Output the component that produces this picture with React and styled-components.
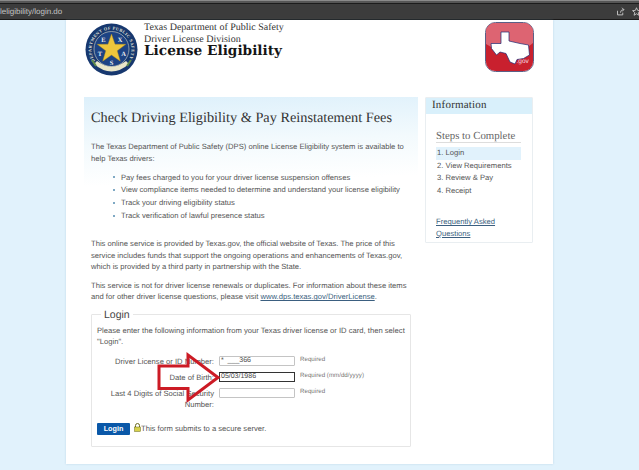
import React from 'react';
import styled, { createGlobalStyle } from 'styled-components';

const GlobalStyle = createGlobalStyle`
  html, body {
    margin: 0;
    padding: 0;
    height: 470px;
    overflow: hidden;
    background: #e1f2fc;
    font-family: "Liberation Sans", Arial, sans-serif;
    text-rendering: geometricPrecision;
  }
`;

const serif = '"Liberation Serif", "Times New Roman", serif';

const Page = styled.div`
  position: relative;
  width: 639px;
  height: 470px;
  overflow: hidden;
`;

// browser chrome strip on top of the shot
const TabStrip = styled.div`
  height: 4px;
  background: linear-gradient(#8a8a8a 0 1px, #565656 1px 3px, #1c1c1c 3px);
`;

const AddressBar = styled.div`
  height: 15px;
  background: #3c3c3c;
  border-bottom: 1px solid #1a1a1a;
  display: flex;
  align-items: center;
  justify-content: space-between;
  color: #c4c4c4;
  font-size: 8px;
`;

const BarIcons = styled.div`
  display: flex;
  gap: 7px;
  align-items: center;
  color: #c9c9c9;
  margin-right: -2px;
`;

const Sheet = styled.main`
  margin-left: 66px;
  width: 469px;
  height: 444px;
  padding: 0 0 0 18px;
  background: #fff;
  box-shadow: 0 0 2px rgba(120, 160, 190, 0.35);
`;

const Header = styled.header`
  display: flex;
  align-items: flex-start;
  height: 77px;
  padding-top: 2px;
  box-sizing: border-box;
`;

const Seal = styled.svg`
  width: 53px;
  height: 53px;
  margin: 1px 6px 0 1px;
  flex: none;
`;

const TitleBlock = styled.div`
  font-family: ${serif};
  color: #333;
  flex: 1;
`;

const Agency = styled.div`
  font-size: 10px;
  line-height: 12px;
`;

const AppTitle = styled.h1`
  margin: -2px 0 0;
  font-family: "DejaVu Serif", ${serif};
  font-size: 13.7px;
  line-height: 15px;
  font-weight: 700;
  color: #151515;
`;

const GovLogo = styled.svg`
  width: 49px;
  height: 50px;
  margin-right: 19px;
  flex: none;
`;

const Columns = styled.div`
  display: flex;
  align-items: flex-start;
  gap: 7px;
`;

const Content = styled.section`
  width: 320px;
  padding: 0 7px;
  background: linear-gradient(178deg, #ddf0fb 0, #f3fafd 50px, #fff 90px);
  height: 350px;
  flex: none;
  color: #555;
  font-size: 7.65px;
  line-height: 11.5px;
`;

const Heading = styled.h2`
  margin: 0;
  padding-top: 11px;
  height: 30px;
  font-family: ${serif};
  font-size: 14.3px;
  line-height: 20px;
  font-weight: 400;
  color: #333;
`;

const Para = styled.p`
  margin: ${(p) => p.$top || 0}px 0 0;
`;

const Bullets = styled.ul`
  list-style: none;
  margin: 7px 0 0;
  padding: 0 0 0 22px;
`;

const Bullet = styled.li`
  display: flex;
  align-items: center;
  height: 12.8px;
  gap: 6px;
  &::before {
    content: '';
    width: 2px;
    height: 2px;
    background: #7fa9c4;
  }
`;

const TextLink = styled.a`
  color: #3b5f80;
  text-decoration: underline;
`;

const LoginBox = styled.fieldset`
  margin: 6px 0 0;
  padding: 4px 5px 0;
  width: 320px;
  height: 138px;
  box-sizing: border-box;
  border: 1px solid #e6e6e6;
  border-radius: 1px;
`;

const Legend = styled.legend`
  margin-left: 4px;
  padding: 0 3px;
  font-size: 10.5px;
  line-height: 12px;
  color: #444;
`;

const FormRows = styled.div`
  display: flex;
  flex-direction: column;
  gap: 4.5px;
  margin-top: 8px;
`;

const FormRow = styled.div`
  display: grid;
  grid-template-columns: 116px 77px auto;
  column-gap: 5px;
  align-items: start;
`;

const Label = styled.label`
  text-align: right;
  line-height: 11.5px;
  margin-right: -1px;
`;

const Field = styled.div`
  box-sizing: border-box;
  height: 10px;
  margin-left: 1px;
  padding-left: 1px;
  border: 1px solid ${(p) => (p.$focus ? '#333' : '#c4c4c4')};
  border-radius: ${(p) => (p.$focus ? 0 : 1)}px;
  background: #fff;
  font-size: 7px;
  line-height: 8px;
  color: #444;
`;

const Hint = styled.span`
  font-size: 6.2px;
  line-height: 8px;
  color: #777;
`;

const Submit = styled.div`
  display: flex;
  align-items: center;
  margin-top: 12px;
`;

const LoginButton = styled.button`
  width: 33px;
  height: 12px;
  padding: 0;
  border: 0;
  border-radius: 1px;
  background: #0a58a8;
  color: #fff;
  font-family: inherit;
  font-size: 7.2px;
  font-weight: 700;
  line-height: 12px;
  margin-right: 4px;
`;

const Lock = styled.svg`
  width: 7px;
  height: 9px;
  flex: none;
  margin-top: -2px;
`;

const Sidebar = styled.aside`
  width: 108px;
  height: 146px;
  box-sizing: border-box;
  flex: none;
  background: #fff;
  border: 1px solid #e9eef1;
  border-radius: 1px;
  color: #555;
  font-size: 7.65px;
`;

const SideTitle = styled.div`
  height: 16px;
  padding-left: 6px;
  background: #d9f0fb;
  font-family: ${serif};
  font-size: 11px;
  line-height: 15px;
  color: #333;
  letter-spacing: 0.2px;
`;

const SideBody = styled.div`
  padding: 16px 11px 0 10px;
`;

const StepsTitle = styled.div`
  height: 12px;
  border-bottom: 1px solid #ddd;
  font-family: ${serif};
  font-size: 10.8px;
  line-height: 12px;
  color: #666;
  margin-bottom: 4px;
`;

const Step = styled.div`
  height: 12.6px;
  line-height: 12.6px;
  padding-left: 1px;
  background: ${(p) => (p.$active ? '#e1f2fc' : 'transparent')};
`;

const FaqLink = styled(TextLink)`
  display: block;
  margin-top: 19px;
  line-height: 11.5px;
`;

const Arrow = styled.svg`
  position: absolute;
  left: 150px;
  top: 345px;
  width: 80px;
  height: 65px;
  pointer-events: none;
`;

const steps = ['1. Login', '2. View Requirements', '3. Review & Pay', '4. Receipt'];

const bullets = [
  'Pay fees charged to you for your driver license suspension offenses',
  'View compliance items needed to determine and understand your license eligibility',
  'Track your driving eligibility status',
  'Track verification of lawful presence status',
];

const starPoints = Array.from({ length: 10 }, (_, i) => {
  const r = i % 2 === 0 ? 15 : 6;
  const a = (Math.PI / 5) * i - Math.PI / 2;
  return `${(26.5 + r * Math.cos(a)).toFixed(2)},${(26 + r * Math.sin(a)).toFixed(2)}`;
}).join(' ');

const SealIcon = () => (
  <Seal viewBox="0 0 53 53">
    <defs>
      <path id="sealArc" d="M10.1 38 A20 20 0 1 1 42.9 38" />
    </defs>
    <circle cx="26.5" cy="26.5" r="26" fill="#17386f" />
    <circle cx="26.5" cy="26" r="17.5" fill="#1d4384" stroke="#d8d8c8" strokeWidth="0.6" />
    <text fontFamily="Liberation Serif, serif" fontSize="4.3" fontWeight="700" fill="#e6e6dc">
      <textPath href="#sealArc" textLength="84" lengthAdjust="spacing">DEPARTMENT OF PUBLIC SAFETY</textPath>
    </text>
    <path d="M9 41 Q26.5 56 44 41 L41 38 Q26.5 49 12 38 Z" fill="#e9e6c9" />
    <path d="M7 37 l4 6 M46 37 l-4 6" stroke="#5f8a4a" strokeWidth="2" />
    <polygon points={starPoints} fill="#eec63c" stroke="#b08c1c" strokeWidth="0.4" />
    <g fontFamily="Liberation Serif, serif" fontSize="6.5" fontWeight="700" fill="#f2f2f2" textAnchor="middle">
      <text x="18.5" y="19">E</text>
      <text x="35" y="19">X</text>
      <text x="15" y="33">T</text>
      <text x="38.5" y="33">A</text>
      <text x="26.5" y="42">S</text>
    </g>
  </Seal>
);

const TexasGovIcon = () => (
  <GovLogo viewBox="0 0 49 50">
    <defs>
      <clipPath id="logoClip">
        <rect x="1" y="1" width="47" height="48" rx="9" />
      </clipPath>
    </defs>
    <rect x="0.5" y="0.5" width="48" height="49" rx="10" fill="#fff" stroke="#5b5f86" />
    <g clipPath="url(#logoClip)">
      <rect x="1" y="1" width="47" height="48" fill="#c9202e" />
      <path d="M1 1 H48 V21 Q36 32 22 30 Q10 28 1 22 Z" fill="#dd6472" />
    </g>
    <path
      d="M16 10 L24 10 L24 19 L35 21.5 L43.5 23 L44.5 33 L38.5 36.5 L32 37.5 L30 42 L25 40 L21 31.5 L15 30 L11.5 33 L6.5 26.5 L6 21.5 L16 21.5 Z"
      fill="#fff"
      stroke="#1d2a74"
      strokeWidth="0.7"
      strokeLinejoin="round"
    />
    <text x="31.5" y="41" fontFamily="Liberation Sans, sans-serif" fontSize="6.5" fill="#f6dfe1">.gov</text>
  </GovLogo>
);

const App = () => (
  <Page>
    <GlobalStyle />
    <TabStrip />
    <AddressBar>
      <span>leligibility/login.do</span>
      <BarIcons>
        <svg width="9" height="9" viewBox="0 0 24 24" fill="none" stroke="currentColor" strokeWidth="2.4">
          <path d="M4 10v11h14v-6M12 15c0-5 3-8 9-8M16 2l5 5-5 5" />
        </svg>
        <svg width="9" height="9" viewBox="0 0 24 24" fill="none" stroke="currentColor" strokeWidth="2.4">
          <path d="M12 2l3 7 7.5.7-5.7 5 1.7 7.3L12 18l-6.5 4 1.7-7.3-5.7-5L9 9z" />
        </svg>
      </BarIcons>
    </AddressBar>
    <Sheet>
      <Header>
        <SealIcon />
        <TitleBlock>
          <Agency>Texas Department of Public Safety</Agency>
          <Agency>Driver License Division</Agency>
          <AppTitle>License Eligibility</AppTitle>
        </TitleBlock>
        <TexasGovIcon />
      </Header>
      <Columns>
        <Content>
          <Heading>Check Driving Eligibility &amp; Pay Reinstatement Fees</Heading>
          <Para $top={3}>
            The Texas Department of Public Safety (DPS) online License Eligibility system is available to help Texas drivers:
          </Para>
          <Bullets>
            {bullets.map((b) => (
              <Bullet key={b}>{b}</Bullet>
            ))}
          </Bullets>
          <Para $top={16}>
            This online service is provided by Texas.gov, the official website of Texas. The price of this service includes funds that support the ongoing operations and enhancements of Texas.gov, which is provided by a third party in partnership with the State.
          </Para>
          <Para $top={7}>
            This service is not for driver license renewals or duplicates. For information about these items and for other driver license questions, please visit <TextLink>www.dps.texas.gov/DriverLicense</TextLink>.
          </Para>
          <LoginBox>
            <Legend>Login</Legend>
            <div>
              Please enter the following information from your Texas driver license or ID card, then select "Login".
            </div>
            <FormRows>
              <FormRow>
                <Label>Driver License or ID Number:</Label>
                <Field>*&nbsp; ___366</Field>
                <Hint>Required</Hint>
              </FormRow>
              <FormRow>
                <Label>Date of Birth:</Label>
                <Field $focus>05/03/1986</Field>
                <Hint>Required (mm/dd/yyyy)</Hint>
              </FormRow>
              <FormRow>
                <Label>Last 4 Digits of Social Security Number:</Label>
                <Field />
                <Hint>Required</Hint>
              </FormRow>
            </FormRows>
            <Submit>
              <LoginButton type="button">Login</LoginButton>
              <Lock viewBox="0 0 7 9">
                <path d="M1.5 4V2.5a2 2 0 0 1 4 0V4" fill="none" stroke="#6b6b20" strokeWidth="1" />
                <rect x="0.5" y="4" width="6" height="4.5" fill="#d8d24a" stroke="#6b6b20" strokeWidth="0.5" />
              </Lock>
              <span>This form submits to a secure server.</span>
            </Submit>
          </LoginBox>
        </Content>
        <Sidebar>
          <SideTitle>Information</SideTitle>
          <SideBody>
            <StepsTitle>Steps to Complete</StepsTitle>
            {steps.map((s, i) => (
              <Step key={s} $active={i === 0}>{s}</Step>
            ))}
            <FaqLink>Frequently Asked Questions</FaqLink>
          </SideBody>
        </Sidebar>
      </Columns>
    </Sheet>
    <Arrow viewBox="150 345 80 65">
      <path
        d="M159 366 H188 V355 L218 377.5 L188 400 V388.5 H159 Z"
        fill="none"
        stroke="#cc1b25"
        strokeWidth="3"
      />
    </Arrow>
  </Page>
);

export default App;
